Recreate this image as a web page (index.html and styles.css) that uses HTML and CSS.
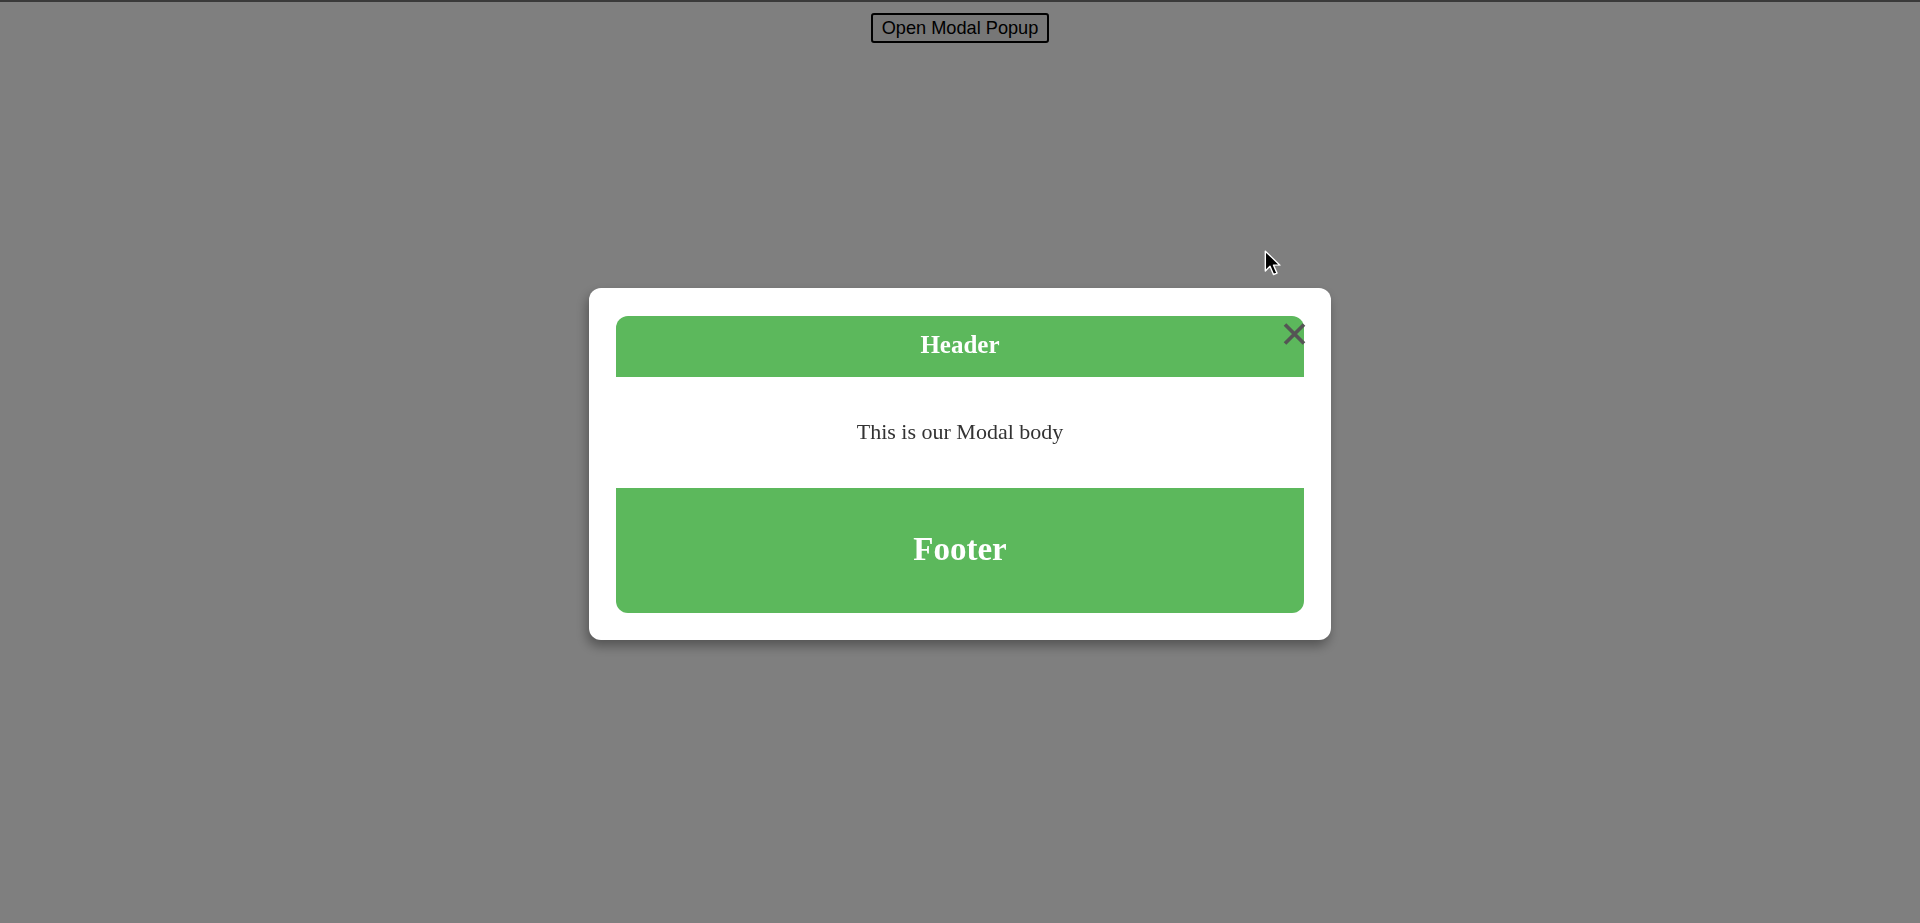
FILE: index.html
```html
<!DOCTYPE html>
<html>
<head>
<meta charset="utf-8">
<link rel="stylesheet" href="styles.css">
</head>
<body>
<div class="page">
  <button class="open-btn">Open Modal Popup</button>
</div>
<div class="overlay">
  <div class="modal">
    <span class="close" aria-label="close">
      <svg width="23" height="22" viewBox="0 0 23 22"><path d="M2 1.5 L21 20.5 M21 1.5 L2 20.5" stroke="#555" stroke-width="3.7" fill="none"/></svg>
    </span>
    <div class="modal-header"><h2>Header</h2></div>
    <div class="modal-body"><p>This is our Modal body</p></div>
    <div class="modal-footer"><h1>Footer</h1></div>
  </div>
</div>
<svg class="cursor" width="19" height="28" viewBox="0 0 16 24"><path d="M1 1 L1 18 L5 14 L8 21 L11 19.8 L8 13 L13.5 13 Z" fill="#000" stroke="#fff" stroke-width="1.2" stroke-linejoin="round"/></svg>
</body>
</html>
```

FILE: styles.css
```css
html, body {
  margin: 0;
  padding: 0;
  height: 100%;
}
body {
  font-family: "Liberation Serif", "Times New Roman", serif;
  background: #fff;
}
.page {
  display: flex;
  justify-content: center;
  padding-top: 13px;
}
.open-btn {
  font-family: "Liberation Sans", Arial, sans-serif;
  font-size: 18.2px;
  background: #efefef;
  color: #000;
  border: 2px solid #000;
  border-radius: 3px;
  padding: 3px 9px;
  line-height: 20px;
}
.overlay {
  position: fixed;
  inset: 0;
  background: rgba(0, 0, 0, 0.5);
  border-top: 2px solid #3a3a3a;
  display: flex;
  align-items: center;
  justify-content: center;
}
.modal {
  position: relative;
  width: 688px;
  padding: 28px 27px 27px;
  background: #fff;
  border-radius: 12px;
  box-shadow: -2px 6px 12px rgba(0, 0, 0, 0.35);
  margin-top: 2px;
}
.close {
  position: absolute;
  top: 35px;
  right: 25px;
  display: block;
  width: 23px;
  height: 22px;
}
.close svg { display: block; }
.modal-header {
  background: #5cb85c;
  color: #fff;
  height: 61px;
  border-radius: 12px 12px 0 0;
  display: flex;
  align-items: center;
  justify-content: center;
}
.modal-header h2 {
  margin: 0;
  font-size: 25px;
  font-weight: bold;
  padding-bottom: 2px;
}
.modal-body {
  height: 111px;
  display: flex;
  align-items: center;
  justify-content: center;
  color: #333;
}
.modal-body p {
  margin: 0;
  font-size: 22px;
  padding-bottom: 1px;
}
.modal-footer {
  background: #5cb85c;
  color: #fff;
  height: 125px;
  border-radius: 0 0 12px 12px;
  display: flex;
  align-items: center;
  justify-content: center;
}
.modal-footer h1 {
  margin: 0;
  font-size: 33px;
  font-weight: bold;
  padding-bottom: 2px;
}
.cursor {
  position: fixed;
  left: 1264px;
  top: 250px;
}
```
